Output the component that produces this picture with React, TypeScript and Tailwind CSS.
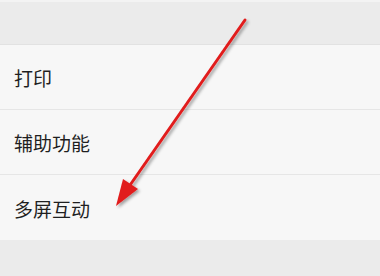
export default function App() {
  const rows = ['打印', '辅助功能', '多屏互动'];
  return (
    <div className="relative w-[380px] h-[276px] overflow-hidden bg-[#ebebeb] font-['Noto_Sans_CJK_SC',sans-serif]">
      <div className="h-[2px] bg-[#f3f3f3]" />
      <div className="h-[43px] border-b border-[#e2e2e2]" />
      <div className="bg-[#f7f7f7]">
        {rows.map((label, i) => (
          <div
            key={label}
            className={`flex items-center h-[65px] pl-[14px] pt-[3px] text-[19px] text-[#1f1f1f] ${
              i < rows.length - 1 ? 'border-b border-[#e6e6e6]' : ''
            }`}
          >
            {label}
          </div>
        ))}
      </div>

      {/* annotation arrow */}
      <svg className="absolute left-0 top-0" width="380" height="276" viewBox="0 0 380 276">
        <defs>
          <filter id="sh" x="-20%" y="-20%" width="140%" height="140%">
            <feDropShadow dx="2" dy="2" stdDeviation="1.5" floodColor="#000" floodOpacity="0.35" />
          </filter>
        </defs>
        <g filter="url(#sh)">
          <line x1="245" y1="20" x2="128" y2="188" stroke="#e11d1d" strokeWidth="3" strokeLinecap="round" />
          <polygon points="116,206 123,179 138,189" fill="#e11d1d" />
        </g>
      </svg>
    </div>
  );
}
